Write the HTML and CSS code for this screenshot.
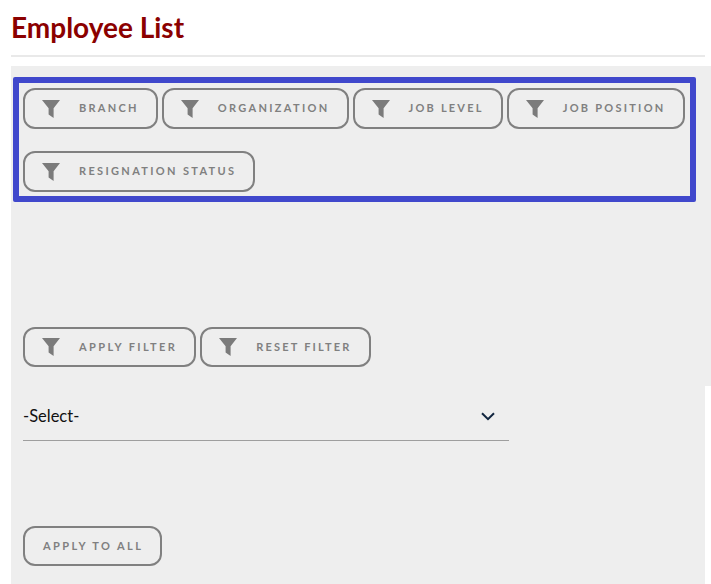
FILE: index.html
```html
<!DOCTYPE html>
<html lang="en">
<head>
<meta charset="utf-8">
<title>Employee List</title>
<link rel="stylesheet" href="styles.css">
</head>
<body>
<svg class="sprite" width="0" height="0" aria-hidden="true"><symbol id="funnel" viewBox="0 0 18 18"><path d="M0 0H18L11.6 8.2V18L6.6 14.6V8.2Z"/></symbol></svg>
<main class="page">
  <h1 class="title">Employee List</h1>
  <div class="rule"></div>
  <section class="filters">
    <div class="focus-box">
      <button class="btn btn-tight"><svg class="funnel"><use href="#funnel"/></svg><span>Branch</span></button>
      <button class="btn"><svg class="funnel"><use href="#funnel"/></svg><span>Organization</span></button>
      <button class="btn btn-tighter"><svg class="funnel"><use href="#funnel"/></svg><span>Job Level</span></button>
      <button class="btn btn-tight"><svg class="funnel"><use href="#funnel"/></svg><span>Job Position</span></button>
      <button class="btn"><svg class="funnel"><use href="#funnel"/></svg><span>Resignation Status</span></button>
    </div>
    <div class="actions">
      <button class="btn btn-short"><svg class="funnel"><use href="#funnel"/></svg><span>Apply Filter</span></button>
      <button class="btn btn-short btn-tighter"><svg class="funnel"><use href="#funnel"/></svg><span>Reset Filter</span></button>
    </div>
  </section>
  <section class="bulk">
    <div class="select">
      <span>-Select-</span>
      <svg class="chevron" viewBox="0 0 14 9"><path d="M1 1.2L7 7.2L13 1.2"/></svg>
    </div>
    <button class="btn btn-short btn-plain"><span>Apply to all</span></button>
  </section>
</main>
</body>
</html>
```

FILE: styles.css
```css
* { box-sizing: border-box; }
html, body { margin: 0; background: #fff; }
body { font-family: Lato, sans-serif; overflow: hidden; height: 584px; }
.sprite { position: absolute; }
.page { padding-left: 11px; width: 705px; }
.title {
  margin: 0;
  height: 55px;
  padding-top: 10px;
  font-size: 28px;
  line-height: 34px;
  font-weight: 700;
  color: #8b0000;
}
.rule { height: 2px; background: #e9e9e9; margin-bottom: 9px; }
.filters {
  background: #eee;
  margin-right: -6px;
  height: 320px;
  padding-top: 11px;
}
.focus-box {
  margin-left: 2px;
  width: 683px;
  height: 125px;
  border: 6px solid #4048cc;
  border-radius: 2px;
  padding: 5px 0 0 4px;
  display: flex;
  flex-wrap: wrap;
  align-content: flex-start;
  column-gap: 4px;
  row-gap: 22px;
}
.btn {
  display: flex;
  align-items: center;
  height: 41px;
  padding: 0 17px;
  border: 2px solid #808080;
  border-radius: 12px;
  background: transparent;
  color: #808080;
  font-family: Lato, sans-serif;
  font-size: 11px;
  font-weight: 700;
  letter-spacing: 2.33px;
  text-transform: uppercase;
  white-space: nowrap;
}
.btn span { padding-bottom: 2px; }
.btn-short { height: 40px; letter-spacing: 2.4px; }
.btn-tight { letter-spacing: 2.26px; }
.btn-tighter { letter-spacing: 2.2px; }
.btn-plain { padding-left: 18px; }
.funnel { width: 18px; height: 18px; margin-right: 19px; fill: #7b7b7b; flex: none; }
.actions {
  display: flex;
  gap: 4px;
  margin: 125px 0 0 12px;
}
.bulk { background: #eee; height: 198px; padding: 0 0 0 12px; }
.select {
  width: 486px;
  height: 55px;
  padding: 19px 14px 0 0;
  border-bottom: 1px solid #9e9e9e;
  display: flex;
  justify-content: space-between;
  font-size: 16.5px;
  line-height: 22px;
  color: #111;
}
.chevron {
  width: 14px;
  height: 9px;
  margin-top: 7px;
  fill: none;
  stroke: #10253f;
  stroke-width: 2;
}
.btn-plain { margin-top: 85px; }
```
